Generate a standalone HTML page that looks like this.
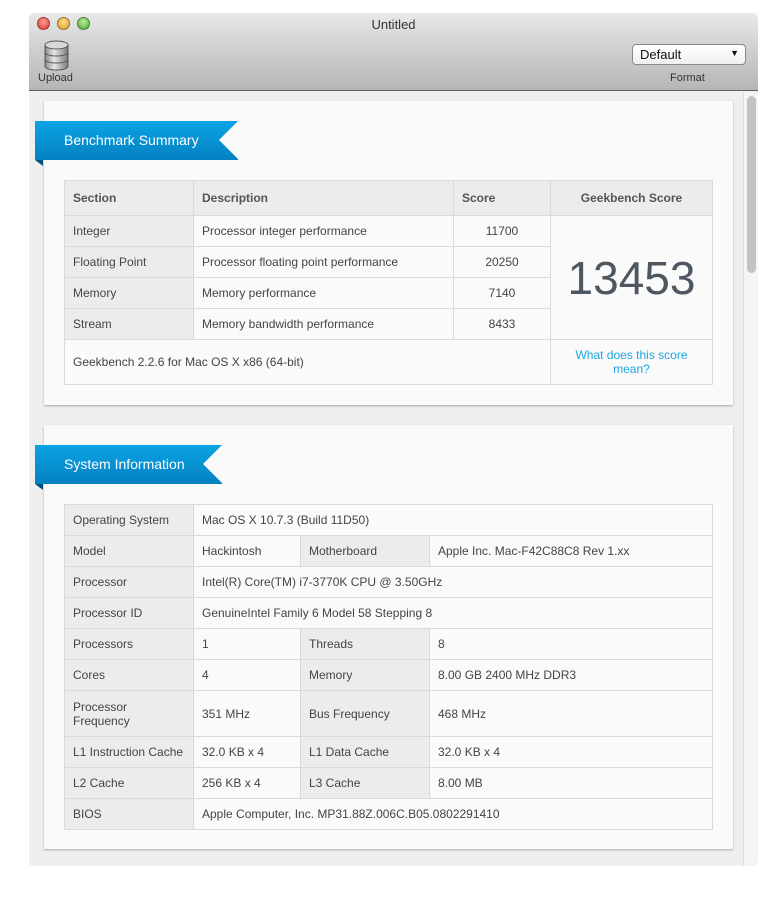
<!DOCTYPE html>
<html><head><meta charset="utf-8"><style>
*{margin:0;padding:0;box-sizing:border-box}
body{width:782px;height:900px;background:#fff;font-family:"Liberation Sans",sans-serif;position:relative;overflow:hidden}
.win{position:absolute;left:29px;top:13px;width:729px;height:853px;border-radius:5px 5px 4px 4px;overflow:hidden;background:#efefef}
.tb{position:absolute;left:0;top:0;width:729px;height:78px;background:linear-gradient(#e9e9e9,#d3d3d3 40%,#b6b6b6);border-bottom:1px solid #5e5e5e}
.title{position:absolute;top:4px;width:100%;text-align:center;font-size:13px;color:#333}
.light{position:absolute;top:4px;width:13px;height:13px;border-radius:50%;border:1px solid rgba(0,0,0,.35)}
.lbl{position:absolute;font-size:11px;color:#333}
.sel{position:absolute;left:603px;top:31px;width:114px;height:21px;background:linear-gradient(#fff,#f0f0f0);border:1px solid #8a8a8a;border-radius:4px;font-size:13px;padding:2px 0 0 7px;color:#111}
.sb{position:absolute;left:714px;top:79px;width:15px;height:774px;background:#f5f5f5;border-left:1px solid #ddd}
.thumb{position:absolute;left:3px;top:4px;width:9px;height:177px;border-radius:5px;background:#c2c2c2}
.card{position:absolute;left:15px;width:689px;background:#fafafa;box-shadow:0 1px 2px rgba(0,0,0,.3)}
.rib{position:absolute;left:6px;height:39px;background:linear-gradient(#0aa3e4,#0581c1);color:#fff;font-size:14px;padding:11px 0 0 29px}
.rib:after{content:"";position:absolute;right:0;top:0;border-right:19px solid #fafafa;border-top:19.5px solid transparent;border-bottom:19.5px solid transparent}
.rib:before{content:"";position:absolute;left:0;bottom:-6px;border-top:6px solid #03507a;border-left:8px solid transparent}
table{position:absolute;left:20px;border-collapse:collapse;font-size:12px;color:#444}
td,th{border:1px solid #dadada;padding:0 8px;height:31px;text-align:left}
th{background:#ececec;height:35px;font-weight:bold;color:#555}
.g{background:#ececec}
</style></head><body>
<div class="win">
 <div class="tb">
  <div class="light" style="left:8px;background:radial-gradient(circle at 50% 35%,#ff9d96,#d8362c)"></div>
  <div class="light" style="left:28px;background:radial-gradient(circle at 50% 35%,#ffe08a,#d9961b)"></div>
  <div class="light" style="left:48px;background:radial-gradient(circle at 50% 35%,#b8f09b,#4ea62f)"></div>
  <div class="title">Untitled</div>
  <svg style="position:absolute;left:14px;top:27px" width="27" height="32"><defs><linearGradient id="m" x1="0" x2="1"><stop offset="0" stop-color="#888"/><stop offset=".4" stop-color="#e6e6e6"/><stop offset="1" stop-color="#7a7a7a"/></linearGradient></defs>
  <path d="M2 5v21c0 2.5 5 4 11.5 4s11.5-1.5 11.5-4V5" fill="url(#m)" stroke="#555"/>
  <path d="M2 12c0 2.5 5 4 11.5 4S25 14.5 25 12M2 19c0 2.5 5 4 11.5 4S25 21.5 25 19" fill="none" stroke="#555"/>
  <ellipse cx="13.5" cy="5" rx="11.5" ry="4" fill="#d8d8d8" stroke="#555"/></svg>
  <div class="lbl" style="left:9px;top:59px">Upload</div>
  <div class="sel">Default<span style="position:absolute;right:6px;top:3px;font-size:9px">▼</span></div>
  <div class="lbl" style="left:641px;top:59px">Format</div>
 </div>
 <div class="sb"><div class="thumb"></div></div>
 <div class="card" style="top:88px;height:304px">
  <div class="rib" style="top:20px;width:203px;left:-9px">Benchmark Summary</div>
  <table style="top:79px;width:649px">
   <tr><th style="width:129px">Section</th><th style="width:260px">Description</th><th style="width:97px">Score</th><th style="text-align:center">Geekbench Score</th></tr>
   <tr><td class="g">Integer</td><td>Processor integer performance</td><td style="text-align:center">11700</td><td rowspan="4" style="text-align:center;font-size:46px;color:#4d5661">13453</td></tr>
   <tr><td class="g">Floating Point</td><td>Processor floating point performance</td><td style="text-align:center">20250</td></tr>
   <tr><td class="g">Memory</td><td>Memory performance</td><td style="text-align:center">7140</td></tr>
   <tr><td class="g">Stream</td><td>Memory bandwidth performance</td><td style="text-align:center">8433</td></tr>
   <tr><td colspan="3" style="height:45px">Geekbench 2.2.6 for Mac OS X x86 (64-bit)</td><td style="text-align:center;color:#1aa6e6">What does this score mean?</td></tr>
  </table>
 </div>
 <div class="card" style="top:412px;height:424px">
  <div class="rib" style="top:20px;width:187px;left:-9px">System Information</div>
  <table style="top:79px;width:649px">
   <tr><td class="g" style="width:129px">Operating System</td><td colspan="3">Mac OS X 10.7.3 (Build 11D50)</td></tr>
   <tr><td class="g">Model</td><td style="width:107px">Hackintosh</td><td class="g" style="width:129px">Motherboard</td><td>Apple Inc. Mac-F42C88C8 Rev 1.xx</td></tr>
   <tr><td class="g">Processor</td><td colspan="3">Intel(R) Core(TM) i7-3770K CPU @ 3.50GHz</td></tr>
   <tr><td class="g">Processor ID</td><td colspan="3">GenuineIntel Family 6 Model 58 Stepping 8</td></tr>
   <tr><td class="g">Processors</td><td>1</td><td class="g">Threads</td><td>8</td></tr>
   <tr><td class="g">Cores</td><td>4</td><td class="g">Memory</td><td>8.00 GB 2400 MHz DDR3</td></tr>
   <tr><td class="g" style="height:46px">Processor<br>Frequency</td><td>351 MHz</td><td class="g">Bus Frequency</td><td>468 MHz</td></tr>
   <tr><td class="g">L1 Instruction Cache</td><td>32.0 KB x 4</td><td class="g">L1 Data Cache</td><td>32.0 KB x 4</td></tr>
   <tr><td class="g">L2 Cache</td><td>256 KB x 4</td><td class="g">L3 Cache</td><td>8.00 MB</td></tr>
   <tr><td class="g">BIOS</td><td colspan="3">Apple Computer, Inc. MP31.88Z.006C.B05.0802291410</td></tr>
  </table>
 </div>
</div>
</body></html>
